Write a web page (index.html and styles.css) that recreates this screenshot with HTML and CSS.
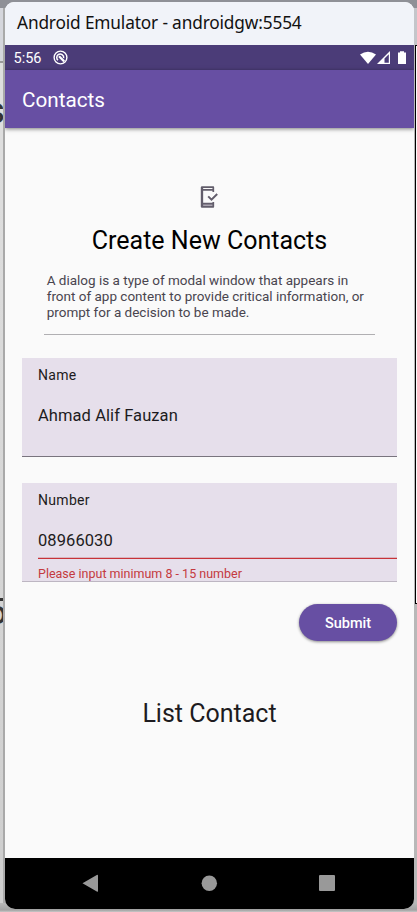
FILE: index.html
```html
<!DOCTYPE html>
<html lang="en">
<head>
<meta charset="utf-8">
<title>Android Emulator</title>
<link rel="stylesheet" href="styles.css">
</head>
<body>
<div class="behind-left"><span class="glyph glyph-top">s</span><span class="glyph glyph-bottom">5</span></div>
<div class="behind-right"></div>
<main class="window">
  <header class="titlebar"><span>Android Emulator - androidgw:5554</span></header>
  <div class="status">
    <span class="clock">5:56</span>
    <svg class="debug" width="15" height="15" viewBox="0 0 15 15" fill="none" stroke="#fff">
      <circle cx="7.5" cy="7.5" r="6.4" stroke-width="1.4"/>
      <path d="M5 10.3A3.6 3.6 0 0 1 5.2 4.7A3.6 3.6 0 0 1 10.7 8.2" stroke-width="1.5"/>
      <path d="M6 6.2l5.2 5.2" stroke-width="2.2"/>
    </svg>
    <svg class="signals" width="47" height="14" viewBox="0 0 47 14">
      <path d="M0 3.5Q8 -2 16 3.5L8 13Z" fill="#fff"/>
      <path d="M17 13L30 0V13Z" fill="#fff"/>
      <path d="M24.5 7.5L28.8 3.2V11.8H24.5Z" fill="#4b3c78"/>
      <path d="M38 1.5h2V.2h4v1.3h2V13h-8Z" fill="#fff"/>
    </svg>
  </div>
  <div class="appbar"><span>Contacts</span></div>
  <section class="content">
    <svg class="phone" width="20" height="24" viewBox="0 0 20 24">
      <path d="M3.2 18.8h11.3v2.4H3.2Z" fill="#aaa5b0"/>
      <path d="M14.3 7V2.2H2.8V21.8H14.3V17M2.8 4.8H14.3M2.8 18.6H14.3" fill="none" stroke="#625d6b" stroke-width="1.7" stroke-linejoin="round"/>
      <path d="M3 2V22" stroke="#625d6b" stroke-width="2.3"/>
      <path d="M9.2 11.4l3.3 3.2L18.2 9" fill="none" stroke="#625d6b" stroke-width="2"/>
    </svg>
    <h1><span>Create New Contacts</span></h1>
    <p class="intro"><span>A dialog is a type of modal window that appears in</span><br><span>front of app content to provide critical information, or</span><br><span>prompt for a decision to be made.</span></p>
    <div class="divider"></div>
    <div class="field">
      <div class="label">Name</div>
      <div class="value"><span class="name">Ahmad Alif Fauzan</span></div>
    </div>
    <div class="field number">
      <div class="label">Number</div>
      <div class="value"><span>08966030</span></div>
      <div class="rule"></div>
      <div class="error"><span>Please input minimum 8 - 15 number</span></div>
    </div>
    <button class="submit">Submit</button>
    <h2><span>List Contact</span></h2>
  </section>
  <nav class="navbar">
    <svg width="409" height="51" viewBox="0 0 409 51" fill="#999">
      <path d="M77.5 25.2L91.8 17Q93 16.5 93 17.7V33Q93 34.2 91.8 33.5Z"/>
      <circle cx="204.3" cy="25.2" r="7.7"/>
      <rect x="314" y="17" width="16" height="16" rx="1"/>
    </svg>
  </nav>
</main>
</body>
</html>
```
FILE: styles.css
```css
* { box-sizing: border-box; }
body {
  margin: 0; width: 417px; height: 912px; padding: 2px 3px 3px 5px;
  position: relative; overflow: hidden;
  background: linear-gradient(#8f9097 0 8px, #c4c5ca 8px 45px, #b8b8b8 45px 903px, #a2a2a2 910px, #c8c8c8);
  font-family: Roboto, sans-serif;
}
.behind-left {
  position: absolute; left: 0; top: 8px; width: 5px; height: 895px; overflow: hidden;
  background: linear-gradient(#d5d6dc 0 53px, #999 53px 55px, #dedede 55px 150px, #cecece);
  border-right: 2px solid #a9a9a9;
}
.glyph { position: absolute; color: #333; font-size: 37px; line-height: 40px; }
.glyph-top { left: -14px; top: 83px; }
.glyph-bottom { left: -14px; top: 584px; }
.behind-right {
  position: absolute; left: 415px; top: 45px; width: 2px; height: 559px;
  background: #fafafa; border: 1px solid #000; border-right: 0;
}
.window {
  position: relative; width: 409px; height: 907px; overflow: hidden;
  display: flex; flex-direction: column; background: #fafafa; border-radius: 9px 9px 10px 10px;
}
.titlebar {
  height: 43px; flex: none; padding-left: 12px; background: #f1f3f9; color: #111;
  font: 17.3px/42px "Noto Sans", sans-serif; letter-spacing: -.16px; white-space: nowrap;
}
.status {
  height: 25px; flex: none; display: flex; align-items: center; padding: 0 8px 0 8.5px;
  background: #4b3c78; color: #fff; font-size: 14.5px;
}
.clock { width: 39.5px; position: relative; top: 1px; }
.signals { margin-left: auto; margin-right: -1px; }
.appbar {
  height: 58px; flex: none; padding-left: 17px; position: relative;
  background: #674fa3; color: #fff; font-size: 20.7px; line-height: 60px;
  box-shadow: 0 1px 4px rgba(0, 0, 0, .5);
}
.content {
  flex: 1; padding: 57px 17px 0; display: flex; flex-direction: column; color: #1d1b20;
}
.phone { margin-left: 176.5px; flex: none; }
h1 { margin: 14px 0 0; color: #000; text-align: center; font-size: 25px; line-height: 36px; font-weight: 400; white-space: nowrap; }
.intro { margin: 14px 0 0 24.7px; font-size: 13.5px; line-height: 15.8px; color: #49454f; white-space: nowrap; }
.divider { margin: 14px 22px 0 22px; height: 1px; flex: none; background: #b0afb2; }
.field { height: 99px; flex: none; margin-top: 23px; padding: 8px 0 0 16px; background: #e6dfeb; border-bottom: 1px solid #79747e; }
.number { margin-top: 26px; border-color: #bdb6c2; }
.label { font-size: 14px; line-height: 19px; letter-spacing: .3px; }
.value { margin-top: 19px; height: 28px; font-size: 16.5px; line-height: 24px; letter-spacing: .08px; }
.rule { margin-top: 1px; height: 1px; background: #c83238; box-shadow: 0 -1px #d9b5bf; }
.error { margin-top: 7px; color: #c43a40; font-size: 12.5px; line-height: 16px; }
.submit {
  align-self: flex-end; flex: none; margin-top: 22px; width: 98px; height: 37px; padding: 1px 0 0; border: 0; border-radius: 19px;
  background: #674fa3; color: #fff; font: 500 14.5px Roboto, sans-serif;
  box-shadow: 0 1px 3px rgba(0, 0, 0, .45);
}
h2 { margin: 55px 0 0; text-align: center; font-size: 25px; line-height: 36px; font-weight: 400; }
.navbar { height: 51px; flex: none; background: #000; }
.navbar svg { display: block; }
```
